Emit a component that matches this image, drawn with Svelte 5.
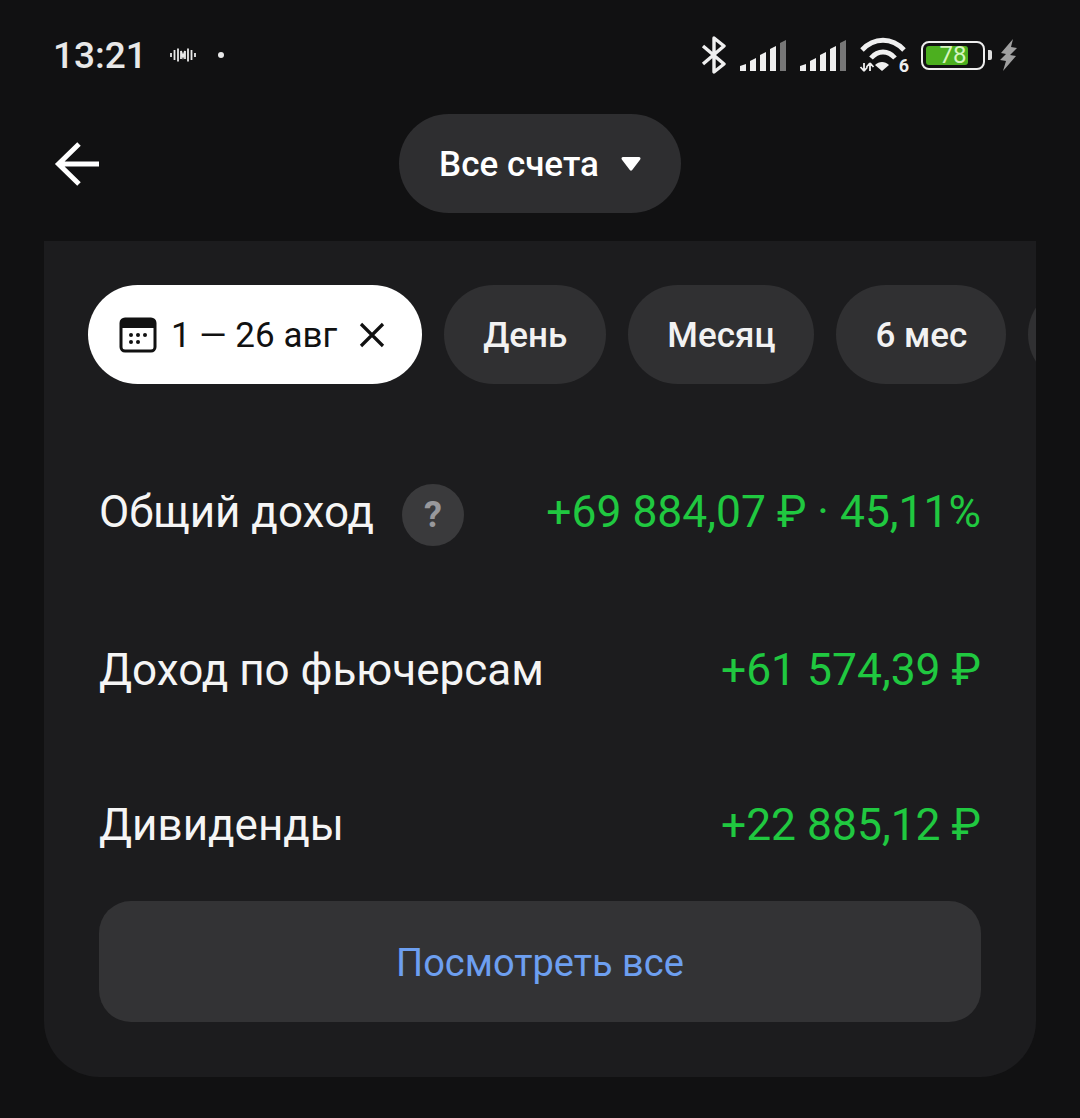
<script>
    const rows = [
        { label: "Доход по фьючерсам", value: "+61 574,39 ₽", height: 156 },
        { label: "Дивиденды", value: "+22 885,12 ₽", height: 154 },
    ];
    const chips = ["День", "Месяц", "6 мес"];
</script>

<div class="screen">
    <div class="status-bar">
        <div class="status-left">
            <span class="time">13:21</span>
            <svg class="voice" width="26" height="16" viewBox="0 0 26 16" fill="none" stroke="#e8e8e8" stroke-width="1.800">
                <path d="M1 6v4M4.500 3v10M8 1.500v13M11 12V4l2 6 2-6v8M18 1.500v13M21.500 3v10M25 6v4" />
            </svg>
            <span class="dot"></span>
        </div>
        <div class="status-right">
            <svg width="26" height="38" viewBox="0 0 26 38" fill="none" stroke="#f0f0f0" stroke-width="3.400" stroke-linejoin="round">
                <path d="M2 10l21 18-10 8V2l10 8L2 28" />
            </svg>
            <svg class="signal" width="48" height="32" viewBox="0 0 48 32">
                <path d="M1 27l6-2v7H1z" fill="#eee" />
                <path d="M11 22l6-3v13h-6z" fill="#eee" />
                <path d="M21 16l6-3v19h-6z" fill="#eee" />
                <path d="M31 10l6-3v25h-6z" fill="#eee" />
                <path d="M41 4l6-3v31h-6z" fill="#777" />
            </svg>
            <svg class="signal" width="48" height="32" viewBox="0 0 48 32">
                <path d="M1 27l6-2v7H1z" fill="#eee" />
                <path d="M11 22l6-3v13h-6z" fill="#eee" />
                <path d="M21 16l6-3v19h-6z" fill="#eee" />
                <path d="M31 10l6-3v25h-6z" fill="#eee" />
                <path d="M41 4l6-3v31h-6z" fill="#777" />
            </svg>
            <div class="wifi">
                <svg width="48" height="36" viewBox="0 0 48 36" fill="none" stroke="#f0f0f0" stroke-width="4.800">
                    <path d="M3 13C15 0 33 0 45 13" />
                    <path d="M12 21c7-8 17-8 24 0" />
                    <path d="M23 34l-7-6c4-4 10-4 14 0z" fill="#f0f0f0" stroke="none" />
                    <path d="M5 26v8M1.500 30l3.500 4M8.500 30L5 34M11 26v8M7.500 30l3.500-4M14.500 30L11 26" stroke-width="1.800" />
                </svg>
                <span class="wifi-num">6</span>
            </div>
            <div class="battery">
                <div class="battery-body">
                    <div class="battery-fill"></div>
                    <span class="battery-num">78</span>
                </div>
                <span class="battery-cap"></span>
            </div>
            <svg class="bolt" width="18" height="32" viewBox="0 0 18 32">
                <path d="M14 0L2 14l5 1-6 6 6 1-3 10 13-15-6-1 7-7-6-1z" fill="#a0a0a0" />
            </svg>
        </div>
    </div>

    <header class="top">
        <svg class="back" width="46" height="46" viewBox="0 0 46 46" fill="none" stroke="#fff" stroke-width="5">
            <path d="M45 23H4M25 3L4.500 23 25 43" />
        </svg>
        <button class="account">
            <span>Все счета</span>
            <svg width="20" height="16" viewBox="0 0 20 16"><path d="M2 1h16a1.500 1.500 0 0 1 1.200 2.400l-8 10.500a1.500 1.500 0 0 1-2.400 0L.8 3.400A1.500 1.500 0 0 1 2 1z" fill="#fff" /></svg>
        </button>
    </header>

    <main class="card">
        <div class="chips">
            <div class="chip active">
                <svg width="38" height="36" viewBox="0 0 38 36" fill="none">
                    <rect x="2" y="2" width="34" height="32" rx="4" stroke="#111" stroke-width="3" />
                    <path d="M2 6a4 4 0 0 1 4-4h26a4 4 0 0 1 4 4v5H2z" fill="#111" />
                    <g fill="#111">
                        <circle cx="12" cy="18" r="2" /><circle cx="19" cy="18" r="2" /><circle cx="26" cy="18" r="2" />
                        <circle cx="12" cy="25" r="2" /><circle cx="19" cy="25" r="2" />
                    </g>
                </svg>
                <span>1 — 26 авг</span>
                <svg class="close" width="26" height="26" viewBox="0 0 26 26" stroke="#111" stroke-width="3.200">
                    <path d="M2 2l22 22M24 2L2 24" />
                </svg>
            </div>
            {#each chips as chip}
                <div class="chip"><span>{chip}</span></div>
            {/each}
            <div class="chip more"></div>
        </div>

        <div class="total">
            <div class="label-wrap">
                <span class="label">Общий доход</span>
                <span class="help">?</span>
            </div>
            <span class="value">+69 884,07 ₽ · 45,11%</span>
        </div>

        {#each rows as row}
            <div class="row" style="height: {row.height}px">
                <span class="label">{row.label}</span>
                <span class="value">{row.value}</span>
            </div>
        {/each}

        <button class="see-all">Посмотреть все</button>
    </main>
</div>

<style>
    :global(body) {
        margin: 0;
        background: #111112;
    }

    .screen {
        width: 1080px;
        height: 1118px;
        background: #111112;
        font-family: Roboto, "Liberation Sans", sans-serif;
        overflow: hidden;
    }

    .status-bar {
        height: 110px;
        box-sizing: border-box;
        padding: 0 63px 0 53px;
        display: flex;
        align-items: center;
        justify-content: space-between;
    }

    .status-left {
        display: flex;
        align-items: center;
        color: #e8e8e8;
    }

    .time {
        font-size: 37px;
        font-weight: 500;
        width: 117px;
    }

    .dot {
        width: 6px;
        height: 6px;
        border-radius: 50%;
        background: #e8e8e8;
        margin-left: 22px;
    }

    .status-right {
        display: flex;
        align-items: center;
    }

    .signal {
        margin-left: 12px;
    }

    .wifi {
        position: relative;
        margin-left: 12px;
        width: 48px;
        height: 36px;
    }

    .wifi-num {
        position: absolute;
        right: -2px;
        bottom: -3px;
        font-size: 18px;
        font-weight: 700;
        color: #eee;
    }

    .battery {
        display: flex;
        align-items: center;
        margin-left: 14px;
    }

    .battery-body {
        position: relative;
        box-sizing: border-box;
        width: 64px;
        height: 29px;
        border: 2.500px solid #eee;
        border-radius: 8px;
        padding: 3px;
    }

    .battery-fill {
        width: 78%;
        height: 100%;
        background: #4caf1f;
        border-radius: 3px;
    }

    .battery-num {
        position: absolute;
        left: 0;
        right: 0;
        top: -2px;
        text-align: center;
        font-size: 24px;
        line-height: 28px;
        color: #d6f5c0;
    }

    .battery-cap {
        width: 4px;
        height: 10px;
        margin-left: 3px;
        background: #ddd;
        border-radius: 0 2px 2px 0;
    }

    .bolt {
        margin-left: 7px;
    }

    .top {
        position: relative;
        height: 131px;
        box-sizing: border-box;
        padding-top: 4px;
        display: flex;
        justify-content: center;
    }

    .back {
        position: absolute;
        left: 54px;
        top: 31px;
    }

    .account {
        height: 99px;
        width: 282px;
        border: 0;
        border-radius: 50px;
        background: #2e2e30;
        color: #fff;
        font: 500 35px Roboto, sans-serif;
        display: flex;
        align-items: center;
        justify-content: center;
        gap: 22px;
    }

    .account span {
        padding-top: 2px;
    }

    .card {
        margin: 0 44px;
        height: 836px;
        box-sizing: border-box;
        padding: 44px 55px 0;
        background: #1c1c1e;
        border-radius: 0 0 56px 56px;
    }

    .chips {
        display: flex;
        gap: 22px;
        margin: 0 -55px 0 -11px;
        overflow: hidden;
    }

    .chip {
        height: 99px;
        flex: none;
        box-sizing: border-box;
        padding: 0 39px;
        border-radius: 50px;
        background: #303032;
        color: #f2f2f2;
        font-size: 35px;
        font-weight: 500;
        display: flex;
        align-items: center;
    }

    .chip span {
        padding-top: 2px;
    }

    .chip.more {
        width: 120px;
    }

    .chip.active {
        background: #fff;
        color: #111;
        font-weight: 400;
        padding: 0 37px 0 31px;
        gap: 14px;
    }

    .chip.active .close {
        margin-left: 8px;
    }

    .total,
    .row {
        display: flex;
        align-items: center;
        justify-content: space-between;
    }

    .total {
        height: 62px;
        margin: 96px 0 49px;
    }

    .label-wrap {
        display: flex;
        align-items: center;
        gap: 28px;
    }

    .label {
        color: #f5f5f5;
        font-size: 44px;
        padding-top: 2px;
    }

    .help {
        width: 62px;
        height: 62px;
        margin-top: 8px;
        border-radius: 50%;
        background: #3a3a3c;
        color: #98989c;
        font-size: 36px;
        font-weight: 700;
        display: flex;
        align-items: center;
        justify-content: center;
    }

    .value {
        color: #20c840;
        font-size: 44.400px;
        padding-top: 2px;
    }

    .see-all {
        display: block;
        width: 100%;
        height: 121px;
        padding-top: 3px;
        border: 0;
        border-radius: 32px;
        background: #333335;
        color: #6d9ff0;
        font: 400 38px Roboto, sans-serif;
    }
</style>
